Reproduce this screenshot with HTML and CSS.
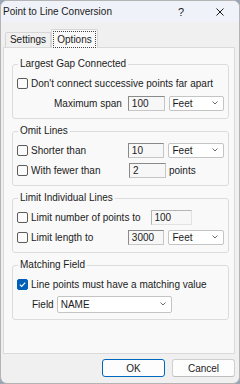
FILE: index.html
```html
<!DOCTYPE html>
<html lang="en">
<head>
  <meta charset="UTF-8" />
  <meta name="viewport" content="width=device-width, initial-scale=1.0" />
  <title>Point to Line Conversion</title>
  <link rel="stylesheet" href="styles.css">
</head>
<body>
  <div class="window">
    <div class="titlebar">
      <span class="title">Point to Line Conversion</span>
      <span class="tb-btn">?</span>
      <span class="tb-btn close">
        <svg width="8" height="8" viewBox="0 0 8 8"><path d="M0.5 0.5L7.5 7.5M7.5 0.5L0.5 7.5" stroke="#1b1b1b" stroke-width="1"/></svg>
      </span>
    </div>

    <div class="client">
      <!-- tabs -->
      <div class="tabs">
        <div class="tab">Settings</div>
        <div class="tab active"><span class="focus">Options</span></div>
      </div>

      <div class="panel">
        <fieldset class="group">
          <legend>Largest Gap Connected</legend>
          <div class="row"><span class="chk"></span>Don't connect successive points far apart</div>
          <div class="row">
            <span class="lbl right">Maximum span</span>
            <span class="edit">100</span>
            <span class="combo">Feet<svg class="chev" width="6" height="4" viewBox="0 0 6 4"><path d="M0.5 0.5L3 3L5.5 0.5" fill="none" stroke="#6b6b6b"/></svg></span>
          </div>
        </fieldset>

        <fieldset class="group">
          <legend>Omit Lines</legend>
          <div class="row">
            <span class="lbl"><span class="chk"></span>Shorter than</span>
            <span class="edit">10</span>
            <span class="combo">Feet<svg class="chev" width="6" height="4" viewBox="0 0 6 4"><path d="M0.5 0.5L3 3L5.5 0.5" fill="none" stroke="#6b6b6b"/></svg></span>
          </div>
          <div class="row">
            <span class="lbl"><span class="chk"></span>With fewer than</span>
            <span class="edit">2</span>
            <span class="suffix">points</span>
          </div>
        </fieldset>

        <fieldset class="group">
          <legend>Limit Individual Lines</legend>
          <div class="row">
            <span class="chk"></span>Limit number of points to
            <span class="edit wide">100</span>
          </div>
          <div class="row">
            <span class="lbl"><span class="chk"></span>Limit length to</span>
            <span class="edit">3000</span>
            <span class="combo">Feet<svg class="chev" width="6" height="4" viewBox="0 0 6 4"><path d="M0.5 0.5L3 3L5.5 0.5" fill="none" stroke="#6b6b6b"/></svg></span>
          </div>
        </fieldset>

        <fieldset class="group">
          <legend>Matching Field</legend>
          <div class="row">
            <span class="chk on"><svg width="9" height="9" viewBox="0 0 9 9"><path d="M1.8 4.6L3.7 6.4L7.2 2.6" fill="none" stroke="#fff" stroke-width="1.1"/></svg></span>Line points must have a matching value
          </div>
          <div class="row">
            <span class="field-lbl">Field</span>
            <span class="combo long">NAME<svg class="chev" width="6" height="4" viewBox="0 0 6 4"><path d="M0.5 0.5L3 3L5.5 0.5" fill="none" stroke="#6b6b6b"/></svg></span>
          </div>
        </fieldset>
      </div>

      <div class="buttons">
        <span class="btn default">OK</span>
        <span class="btn">Cancel</span>
      </div>
    </div>
  </div>
</body>
</html>
```

FILE: styles.css
```css
body{margin:0;background:#9aa6b5;font-family:"Liberation Sans",Arial,sans-serif;font-size:10px;color:#1b1b1b;}
.window{width:240px;height:384px;box-sizing:border-box;border:1px solid #b4b4b4;border-radius:7px;background:#f0f0f0;overflow:hidden;display:flex;flex-direction:column;}

.titlebar{height:21px;flex:none;display:flex;align-items:center;background:#eff2f8;padding:0 9px 0 2px;}
.title{flex:1;line-height:12px;}
.tb-btn{width:20px;height:21px;display:flex;align-items:center;justify-content:center;font-size:11px;}
.tb-btn.close{margin-left:19px;}

.client{flex:1;padding:7px 4px 0 2px;}
.tabs{display:flex;align-items:flex-end;height:18px;position:relative;z-index:1;}
.tab{box-sizing:border-box;height:15px;width:46px;margin-left:2px;border:1px solid #d6d6d6;border-bottom:none;border-radius:2px 2px 0 0;display:flex;align-items:center;justify-content:center;line-height:12px;}
.tab.active{height:19px;width:47px;margin:0 0 -1px 0;background:#f9f9f9;padding:1px 1px 0 1px;align-items:stretch;}
.focus{flex:1;border:1px dotted #444;display:flex;align-items:center;justify-content:center;}

.panel{box-sizing:border-box;height:307px;border:1px solid #dadada;background:#f9f9f9;padding:10px 5px 0 8px;}

.group{margin:0 0 6px 0;border:1px solid #dcdcdc;border-radius:3px;padding:3px 4px 5px 4px;min-width:0;}
.group legend{padding:0 2px;margin-left:1px;line-height:12px;}

.row{height:20px;display:flex;align-items:center;white-space:nowrap;}
.lbl{width:112px;display:flex;align-items:center;}
.lbl.right{justify-content:flex-end;padding-right:6px;box-sizing:border-box;}

.chk{box-sizing:border-box;width:11px;height:11px;flex:none;margin-right:3px;border:1px solid #5c5c5c;border-radius:2px;background:#fbfbfb;display:flex;align-items:center;justify-content:center;}
.chk.on{background:#005fb8;border-color:#005fb8;}

.edit{box-sizing:border-box;width:37px;height:15px;padding-left:3px;border:1px solid #c6c6c6;border-top-color:#8a8a8a;border-left-color:#8a8a8a;background:#f7f7f7;line-height:13px;}
.edit.wide{width:41px;margin-left:10px;border-color:#e2e2e2;border-top-color:#b4b4b4;border-left-color:#b4b4b4;}

.combo{box-sizing:border-box;width:56px;height:15px;margin-left:4px;padding:0 5px 0 3px;border:1px solid #c4c4c4;border-radius:2px;background:#fff;display:flex;align-items:center;justify-content:space-between;line-height:13px;}
.combo.long{width:115px;height:17px;margin-left:3px;}
.suffix{margin-left:3px;}
.field-lbl{margin-left:15px;}

.buttons{display:flex;justify-content:flex-end;gap:7px;margin-top:5px;}
.btn{box-sizing:border-box;width:63px;height:18px;border:1px solid #d0d0d0;border-bottom-color:#bdbdbd;border-radius:3px;background:#fdfdfd;display:flex;align-items:center;justify-content:center;}
.btn.default{border-color:#0067c0;}
```
